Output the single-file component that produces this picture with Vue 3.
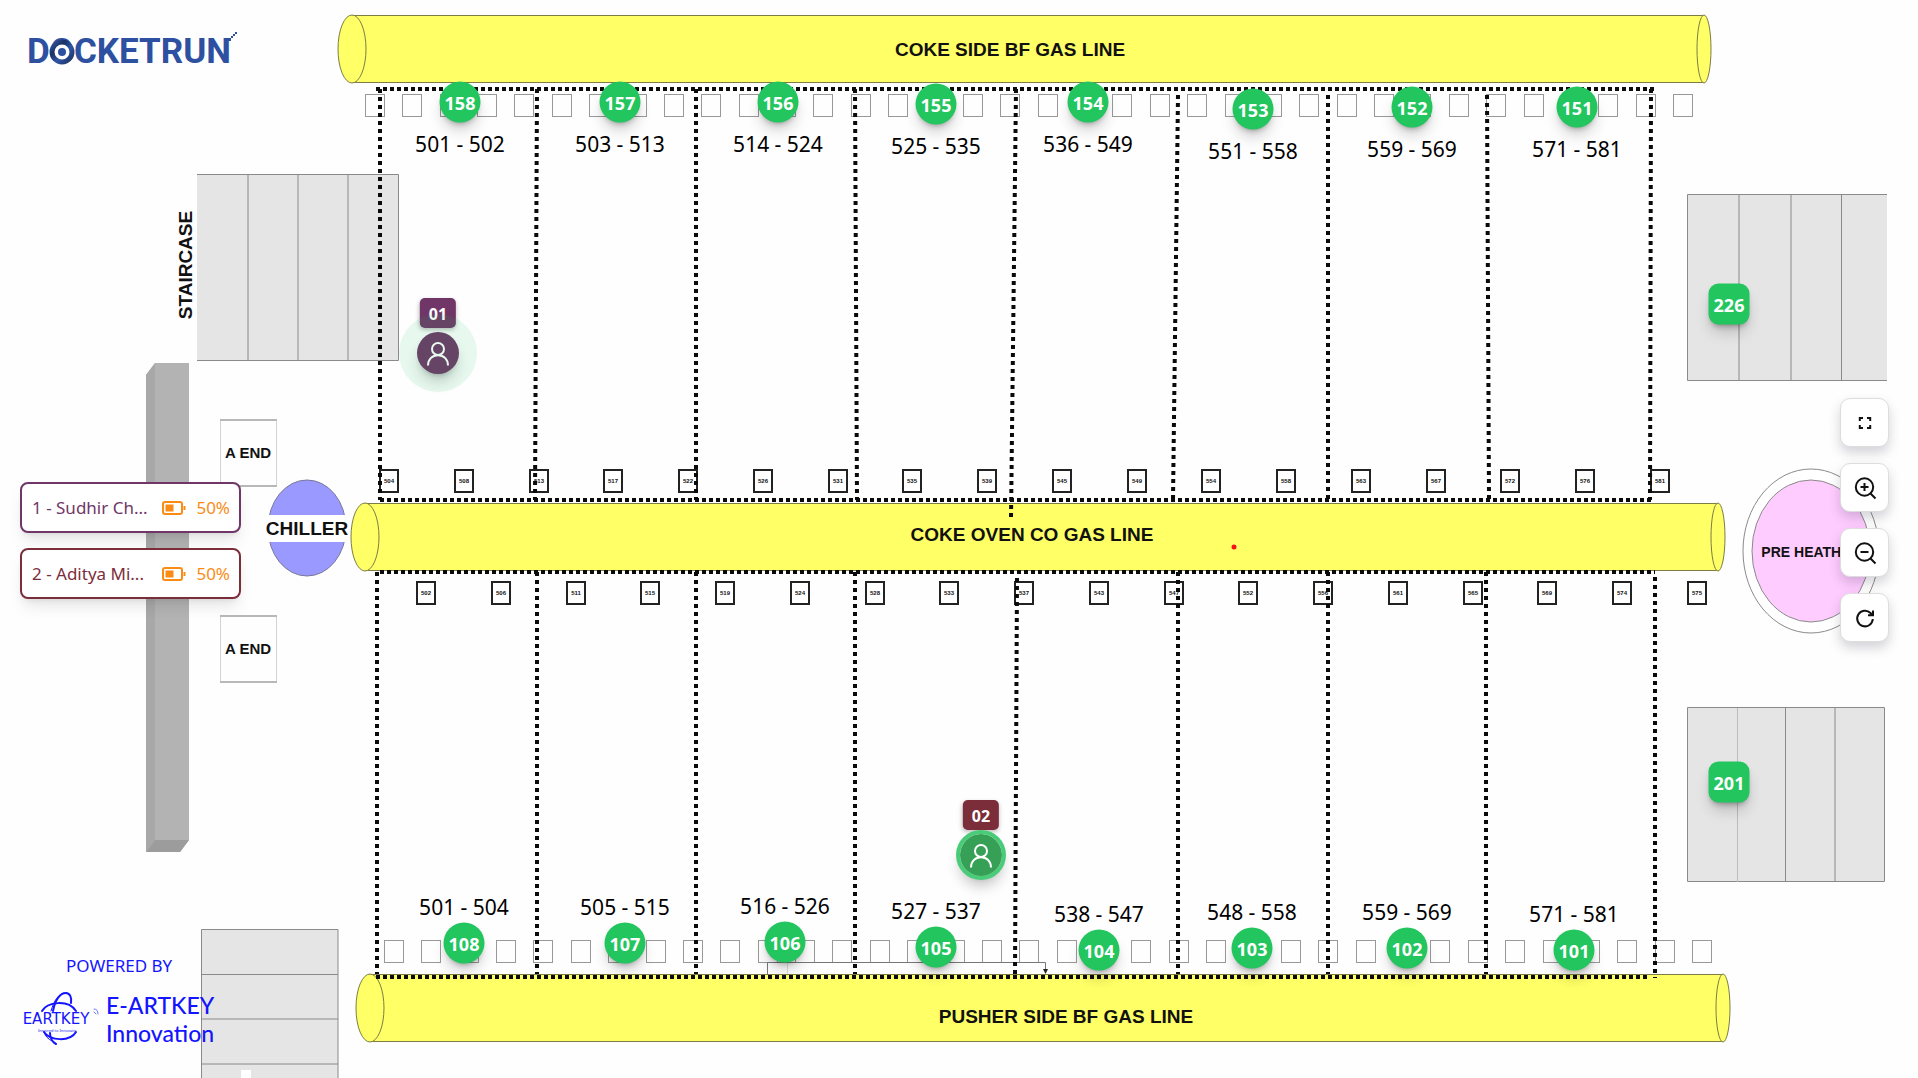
<script setup>
const W = 1918
const H = 1078
const pct = (v, total) => `${(v / total) * 100}%`
const place = (p) => ({ left: pct(p.x, W), top: pct(p.y, H) })

const pipes = [
  { label: 'COKE SIDE BF GAS LINE', left: 352, right: 1704, top: 15, tx: 1010, ty: 56 },
  { label: 'COKE OVEN CO GAS LINE', left: 365, right: 1718, top: 503, tx: 1032, ty: 541 },
  { label: 'PUSHER SIDE BF GAS LINE', left: 370, right: 1723, top: 974, tx: 1066, ty: 1023 },
]

const rails = [
  [376, 89, 1656, 89],
  [380, 500, 1651, 500],
  [380, 572, 1655, 572],
  [376, 977, 1649, 977],
]

const dividers = [
  [380, 89, 380, 500],
  [537, 89, 535, 500],
  [696, 89, 696, 500],
  [855, 89, 857, 500],
  [1016, 89, 1011, 518],
  [1178, 95, 1173, 500],
  [1328, 95, 1328, 500],
  [1487, 95, 1489, 500],
  [1651, 89, 1650, 500],
  [377, 572, 377, 974],
  [537, 572, 537, 974],
  [696, 572, 696, 974],
  [855, 572, 855, 974],
  [1017, 578, 1015, 974],
  [1178, 572, 1178, 974],
  [1328, 572, 1328, 974],
  [1486, 572, 1486, 974],
  [1655, 577, 1655, 978],
]

const spread = (first, last, n) =>
  Array.from({ length: n }, (_, i) => Math.round(first + ((last - first) * i) / (n - 1)))
const topVents = spread(365, 1673, 36)
const bottomVents = spread(384, 1692, 36)

const upperX = spread(380, 1651, 18)
const lowerX = spread(417, 1688, 18)
const ovens = [
  ...[504, 508, 513, 517, 522, 526, 531, 535, 539, 545, 549, 554, 558, 563, 567, 572, 576, 581]
    .map((id, i) => ({ id, x: upperX[i], y: 470 })),
  ...[502, 506, 511, 515, 519, 524, 528, 533, 537, 543, 547, 552, 556, 561, 565, 569, 574, 575]
    .map((id, i) => ({ id, x: lowerX[i], y: 582 })),
]

const anchors = [
  { id: 158, x: 460, y: 102, range: '501 - 502', side: 'below' },
  { id: 157, x: 620, y: 102, range: '503 - 513', side: 'below' },
  { id: 156, x: 778, y: 102, range: '514 - 524', side: 'below' },
  { id: 155, x: 936, y: 104, range: '525 - 535', side: 'below' },
  { id: 154, x: 1088, y: 102, range: '536 - 549', side: 'below' },
  { id: 153, x: 1253, y: 109, range: '551 - 558', side: 'below' },
  { id: 152, x: 1412, y: 107, range: '559 - 569', side: 'below' },
  { id: 151, x: 1577, y: 107, range: '571 - 581', side: 'below' },
  { id: 108, x: 464, y: 943, range: '501 - 504', side: 'above' },
  { id: 107, x: 625, y: 943, range: '505 - 515', side: 'above' },
  { id: 106, x: 785, y: 942, range: '516 - 526', side: 'above' },
  { id: 105, x: 936, y: 947, range: '527 - 537', side: 'above' },
  { id: 104, x: 1099, y: 950, range: '538 - 547', side: 'above' },
  { id: 103, x: 1252, y: 948, range: '548 - 558', side: 'above' },
  { id: 102, x: 1407, y: 948, range: '559 - 569', side: 'above' },
  { id: 101, x: 1574, y: 950, range: '571 - 581', side: 'above' },
  { id: 226, x: 1729, y: 304, square: true },
  { id: 201, x: 1729, y: 782, square: true },
]

const workers = [
  { tag: '01', x: 438, y: 353, tone: 'plum', name: '1 - Sudhir Ch...', battery: '50%' },
  { tag: '02', x: 981, y: 855, tone: 'wine', name: '2 - Aditya Mi...', battery: '50%' },
]
</script>

<template>
  <main class="stage">
    <svg class="plan" viewBox="0 0 1918 1078" role="img" aria-label="Floor plan">
      <g class="stairs">
        <rect class="fill" x="197" y="174" width="201" height="187" />
        <path d="M197 174.500H398.500V360.500H197M248 174V361M298 174V361M348 174V361" />
        <rect class="fill" x="1688" y="194" width="199" height="186" />
        <path d="M1887 194.500H1687.500V380.500H1887M1739 194V380M1791 194V380M1841.500 194V380" />
        <rect class="fill" x="1688" y="708" width="196" height="174" />
        <path d="M1687.500 707.500H1884.500V881.500H1687.500ZM1785.500 708V882M1835 708V882" />
        <path class="faint" d="M1737.500 708V882" />
        <rect class="fill" x="201" y="929" width="137" height="149" />
        <path d="M201.500 1078V929.500H338V1078M201 974.500H338M201 1019H338M201 1064H338" />
        <rect x="241" y="1070" width="10" height="8" fill="#fff" />
      </g>

      <g>
        <path d="M155 363H189V840L180 852H146V375Z" fill="#b3b3b3" />
        <path d="M155 363V840L146 852V375Z" fill="#a8a8a8" />
        <path d="M155 840H189L180 852H146Z" fill="#9c9c9c" />
      </g>

      <text class="label staircase" transform="translate(192 265) rotate(-90)">STAIRCASE</text>

      <g v-for="y in [419, 615]" :key="y">
        <path :d="`M220.500 ${y}V${y + 67}M276.500 ${y}V${y + 67}`" stroke="#d4d4d4" />
        <path :d="`M220 ${y + 1}H277M220 ${y + 67}H277`" stroke="#b8b8b8" stroke-width="2" />
        <text class="label small" x="248" :y="y + 39">A END</text>
      </g>

      <g>
        <ellipse cx="307" cy="528" rx="39" ry="48" fill="#9999ff" stroke="#77779a" />
        <rect x="266" y="515" width="82" height="27" fill="#fff" />
      </g>

      <g fill="#fff" stroke="#8a8a8a">
        <ellipse cx="1811" cy="551" rx="68" ry="82" />
        <ellipse cx="1811" cy="551" rx="59" ry="71" fill="#ffccff" />
      </g>
      <text class="label mid" x="1811" y="557">PRE HEATHER</text>

      <g class="vents">
        <rect v-for="x in topVents" :key="'t' + x" :x="x + 0.5" y="94.500" width="19" height="22" />
        <rect v-for="x in bottomVents" :key="'b' + x" :x="x + 0.5" y="940.500" width="19" height="22" />
      </g>

      <g v-for="o in ovens" :key="o.id + '-' + o.y">
        <rect class="oven" :x="o.x" :y="o.y" width="18" height="22" />
        <text class="label tiny" :x="o.x + 9" :y="o.y + 13">{{ o.id }}</text>
      </g>

      <path d="M767.500 974V962.500H1045.500V970" fill="none" stroke="#777" />
      <path d="M787.500 963V974" stroke="#ddd" />
      <path d="M1043 969h5l-2.500 5z" fill="#222" />

      <g v-for="p in pipes" :key="p.label" class="pipe">
        <path
          :d="`M${p.left} ${p.top + 0.5}H${p.right}A7 34 0 0 1 ${p.right} ${p.top + 67.5}H${p.left}A14 34 0 0 1 ${p.left} ${p.top + 0.5}Z`"
        />
        <ellipse :cx="p.left" :cy="p.top + 34" rx="14" ry="34" />
        <ellipse :cx="p.right" :cy="p.top + 34" rx="7" ry="34" />
      </g>

      <g class="rails">
        <line v-for="(l, i) in rails" :key="i" :x1="l[0]" :y1="l[1]" :x2="l[2]" :y2="l[3]" />
      </g>
      <g class="dividers">
        <line v-for="(l, i) in dividers" :key="i" :x1="l[0]" :y1="l[1]" :x2="l[2]" :y2="l[3]" />
      </g>

      <text v-for="p in pipes" :key="p.label" class="label big" :x="p.tx" :y="p.ty">{{ p.label }}</text>
      <text class="label big" x="307" y="535">CHILLER</text>
      <circle cx="1234" cy="547" r="2.500" fill="#f5141c" />
    </svg>

    <div
      v-for="a in anchors"
      :key="a.id"
      class="anchor"
      :class="{ square: a.square }"
      :style="place(a)"
    >
      {{ a.id }}
      <span v-if="a.range" class="range" :class="a.side">{{ a.range }}</span>
    </div>

    <div v-for="w in workers" :key="w.tag" class="worker" :class="w.tone" :style="place(w)">
      <span class="tag">{{ w.tag }}</span>
      <span class="avatar">
        <svg viewBox="0 0 42 42" fill="none" stroke="#fff" stroke-width="2">
          <circle cx="21" cy="17" r="6" />
          <path d="M11 33.500C11 27.500 15 23.200 21 23.200S31 27.500 31 33.500" />
        </svg>
      </span>
      <span class="halo"></span>
    </div>

    <header class="brand">
      D<span class="ring">O<svg viewBox="0 0 28 28">
        <defs>
          <linearGradient id="ringTone" x1="0" y1="0" x2="1" y2="1">
            <stop offset="0" stop-color="#2f55a4" />
            <stop offset="0.300" stop-color="#1d3263" />
            <stop offset="0.600" stop-color="#2f55a4" />
            <stop offset="1" stop-color="#1d3263" />
          </linearGradient>
        </defs>
        <circle cx="14" cy="14" r="10" fill="#fff" stroke="url(#ringTone)" stroke-width="5" />
        <circle cx="14" cy="14" r="4" fill="#2d50a0" />
      </svg></span>CKETRUN
      <svg class="spark" viewBox="0 0 10 10" fill="#2d50a0">
        <path d="M0 6h3v3h-3zM3 4h2v2h-2zM5 2h2v2h-2zM7 0h2v2h-2z" />
      </svg>
    </header>

    <ul class="legend">
      <li v-for="w in workers" :key="w.tag" :class="w.tone">
        <span class="name">{{ w.name }}</span>
        <svg class="battery" viewBox="0 0 24 16" fill="none" stroke="#fa8c16">
          <rect x="1" y="2" width="19" height="12" rx="2" stroke-width="2" />
          <rect x="3.500" y="4.500" width="8" height="7" fill="#fa8c16" stroke="none" />
          <path d="M22.500 6V10" stroke-width="2" />
        </svg>
        <span class="level">{{ w.battery }}</span>
      </li>
    </ul>

    <nav class="controls" aria-label="Map controls">
      <button type="button" aria-label="Full screen">
        <svg viewBox="0 0 24 24"><path d="M6.800 10V7H10M14 7h3.200v3M17.200 14v3H14M10 17H6.800v-3" /></svg>
      </button>
      <button type="button" aria-label="Zoom in">
        <svg viewBox="0 0 24 24"><circle cx="11.500" cy="11" r="8.700" /><path d="M17.500 17.500L22.500 22.500M11.500 7v8M7.500 11h8" /></svg>
      </button>
      <button type="button" aria-label="Zoom out">
        <svg viewBox="0 0 24 24"><circle cx="11.500" cy="11" r="8.700" /><path d="M17.500 17.500L22.500 22.500M7.500 11h8" /></svg>
      </button>
      <button type="button" aria-label="Reset view">
        <svg viewBox="0 0 24 24"><path d="M19.800 13A7.800 7.800 0 1 1 17.500 7L19.500 9M20 4.500V9.300H15" /></svg>
      </button>
    </nav>

    <footer class="powered">
      <p class="by">POWERED BY</p>
      <div class="partner">
        <svg class="emblem" viewBox="0 0 78 54" fill="none" stroke="#1414ff" stroke-linecap="round">
          <path d="M20 19C25 10 46 7 54 19" stroke-width="2" />
          <path d="M31 19C33 8 38 1 44 1C48 1 50 6 49 11" stroke-width="2" />
          <path d="M29 19C32 8 37 2 42 1" />
          <path d="M22 40C28 49 48 50 54 40" stroke-width="2" />
          <path d="M28 41C28 45 30 50 34 52" stroke-width="2" />
          <path d="M22 40C23 44 26 47 30 49" />
          <path d="M72 20l2 2M72 17c3 0 4 2 4 5" stroke="#7777ff" />
          <text class="mark" x="34" y="32">EARTKEY</text>
          <text class="motto" x="35" y="40">Inspired to Innovate</text>
        </svg>
        <p class="company">E-ARTKEY<br />Innovation</p>
      </div>
    </footer>
  </main>
</template>

<style>
body {
  margin: 0;
  background: #fff;
}
</style>

<style scoped>
.stage {
  position: relative;
  width: 100%;
  aspect-ratio: 1918 / 1078;
  overflow: hidden;
  background: #fefefe;
  font-family: "Noto Sans", sans-serif;
}

.plan {
  display: block;
  width: 100%;
}

.stairs .fill {
  fill: #e5e5e5;
}
.stairs path {
  fill: none;
  stroke: #8a8a8a;
}
.stairs .faint {
  stroke: #bbb;
}

.label {
  font-family: "Liberation Sans", sans-serif;
  font-weight: 700;
  fill: #111;
  text-anchor: middle;
}
.label.big {
  font-size: 19px;
}
.label.mid {
  font-size: 14px;
}
.label.small {
  font-size: 15px;
}
.label.tiny {
  font-size: 6px;
}
.label.staircase {
  font-size: 19px;
  text-anchor: middle;
}

.vents rect {
  fill: none;
  stroke: #999;
}
.oven {
  fill: #fff;
  stroke: #222;
  stroke-width: 2;
}
.pipe {
  fill: #ffff66;
  stroke: #7d7d45;
}
.rails,
.dividers {
  stroke: #0a0a0a;
  stroke-width: 4;
}
.rails {
  stroke-dasharray: 4 3;
}
.dividers {
  stroke-dasharray: 4 4;
}

.anchor {
  position: absolute;
  display: flex;
  align-items: center;
  justify-content: center;
  box-sizing: border-box;
  width: 41px;
  height: 41px;
  padding-top: 1px;
  border-radius: 50%;
  background: #22c55e;
  color: #fff;
  font-size: 18px;
  font-weight: 700;
  transform: translate(-50%, -50%);
  box-shadow: 0 10px 15px -3px rgba(0, 0, 0, 0.2), 0 4px 6px -4px rgba(0, 0, 0, 0.4);
}
.anchor.square {
  border-radius: 10px;
}
.range {
  position: absolute;
  left: 50%;
  transform: translateX(-50%);
  color: #000;
  font-size: 21px;
  font-weight: 400;
  line-height: 24px;
  white-space: nowrap;
}
.range.below {
  top: 50px;
}
.range.above {
  bottom: 45px;
}

.plum {
  --tone: #6f3667;
}
.wine {
  --tone: #7c2d3a;
}
.worker {
  position: absolute;
  width: 42px;
  height: 42px;
  transform: translate(-50%, -50%);
}
.tag {
  position: absolute;
  left: 50%;
  bottom: 46px;
  transform: translateX(-50%);
  box-sizing: border-box;
  height: 30px;
  padding: 1px 9px 0;
  border-radius: 5px;
  background: var(--tone);
  color: #fff;
  font-size: 16px;
  font-weight: 700;
  line-height: 30px;
  box-shadow: 0 2px 4px rgba(0, 0, 0, 0.25);
}
.avatar {
  display: block;
  height: 42px;
  border-radius: 50%;
  background: var(--tone);
  box-shadow: 0 10px 15px -3px rgba(0, 0, 0, 0.2), 0 4px 6px -4px rgba(0, 0, 0, 0.3);
}
.avatar svg {
  display: block;
}
.halo {
  position: absolute;
  inset: -18px;
  border-radius: 50%;
  background: rgba(34, 197, 94, 0.1);
}
.wine .avatar {
  background: #36a156;
}
.wine .halo {
  inset: -4px;
  border: 4px solid #4acb79;
  background: none;
  box-shadow: 0 10px 15px -3px rgba(0, 0, 0, 0.1);
}

.brand {
  position: absolute;
  left: 27px;
  top: 31px;
  color: #2d50a0;
  font-family: Roboto, sans-serif;
  font-size: 35px;
  font-weight: 700;
  line-height: 42px;
}
.ring {
  position: relative;
}
.ring svg {
  position: absolute;
  left: -2px;
  top: 7px;
  width: 28px;
  height: 28px;
}
.spark {
  position: absolute;
  right: -7px;
  top: 1px;
  width: 10px;
  height: 10px;
}

.legend {
  position: absolute;
  left: 20px;
  top: 482px;
  display: flex;
  flex-direction: column;
  gap: 15px;
  width: 221px;
  margin: 0;
  padding: 0;
  list-style: none;
}
.legend li {
  display: flex;
  align-items: center;
  box-sizing: border-box;
  height: 51px;
  padding: 0 9px 0 10px;
  border: 2px solid var(--tone);
  border-radius: 8px;
  background: #fff;
  color: var(--tone);
  font-size: 17px;
  box-shadow: 0 10px 15px -3px rgba(0, 0, 0, 0.1), 0 4px 6px -4px rgba(0, 0, 0, 0.1);
}
.name {
  flex: 1;
  white-space: nowrap;
}
.battery {
  width: 24px;
  height: 16px;
  margin-right: 10px;
}
.level {
  color: #fa8c16;
}

.controls {
  position: absolute;
  right: 29px;
  top: 398px;
  display: flex;
  flex-direction: column;
  gap: 16px;
}
.controls button {
  display: flex;
  align-items: center;
  justify-content: center;
  width: 49px;
  height: 49px;
  padding: 0;
  border: 1px solid #ddd;
  border-radius: 10px;
  background: #fff;
  box-shadow: 0 6px 12px rgba(40, 40, 70, 0.2);
}
.controls svg {
  width: 24px;
  height: 24px;
  fill: none;
  stroke: #111;
  stroke-width: 2;
}

.powered {
  position: absolute;
  left: 22px;
  bottom: 31px;
  color: #1414ff;
}
.powered p {
  margin: 0;
}
.by {
  padding-left: 44px;
  font-size: 17px;
  line-height: 24px;
}
.partner {
  display: flex;
  align-items: center;
  gap: 6px;
  padding-top: 13px;
}
.emblem {
  width: 78px;
  height: 54px;
}
.mark {
  font-family: "DejaVu Sans", sans-serif;
  font-size: 15px;
  fill: #1414ff;
  stroke: none;
  text-anchor: middle;
}
.motto {
  font-size: 4px;
  fill: #1414ff;
  stroke: none;
  text-anchor: middle;
}
.company {
  font-family: Lato, sans-serif;
  font-size: 23px;
  font-weight: 500;
  line-height: 28px;
}
</style>
